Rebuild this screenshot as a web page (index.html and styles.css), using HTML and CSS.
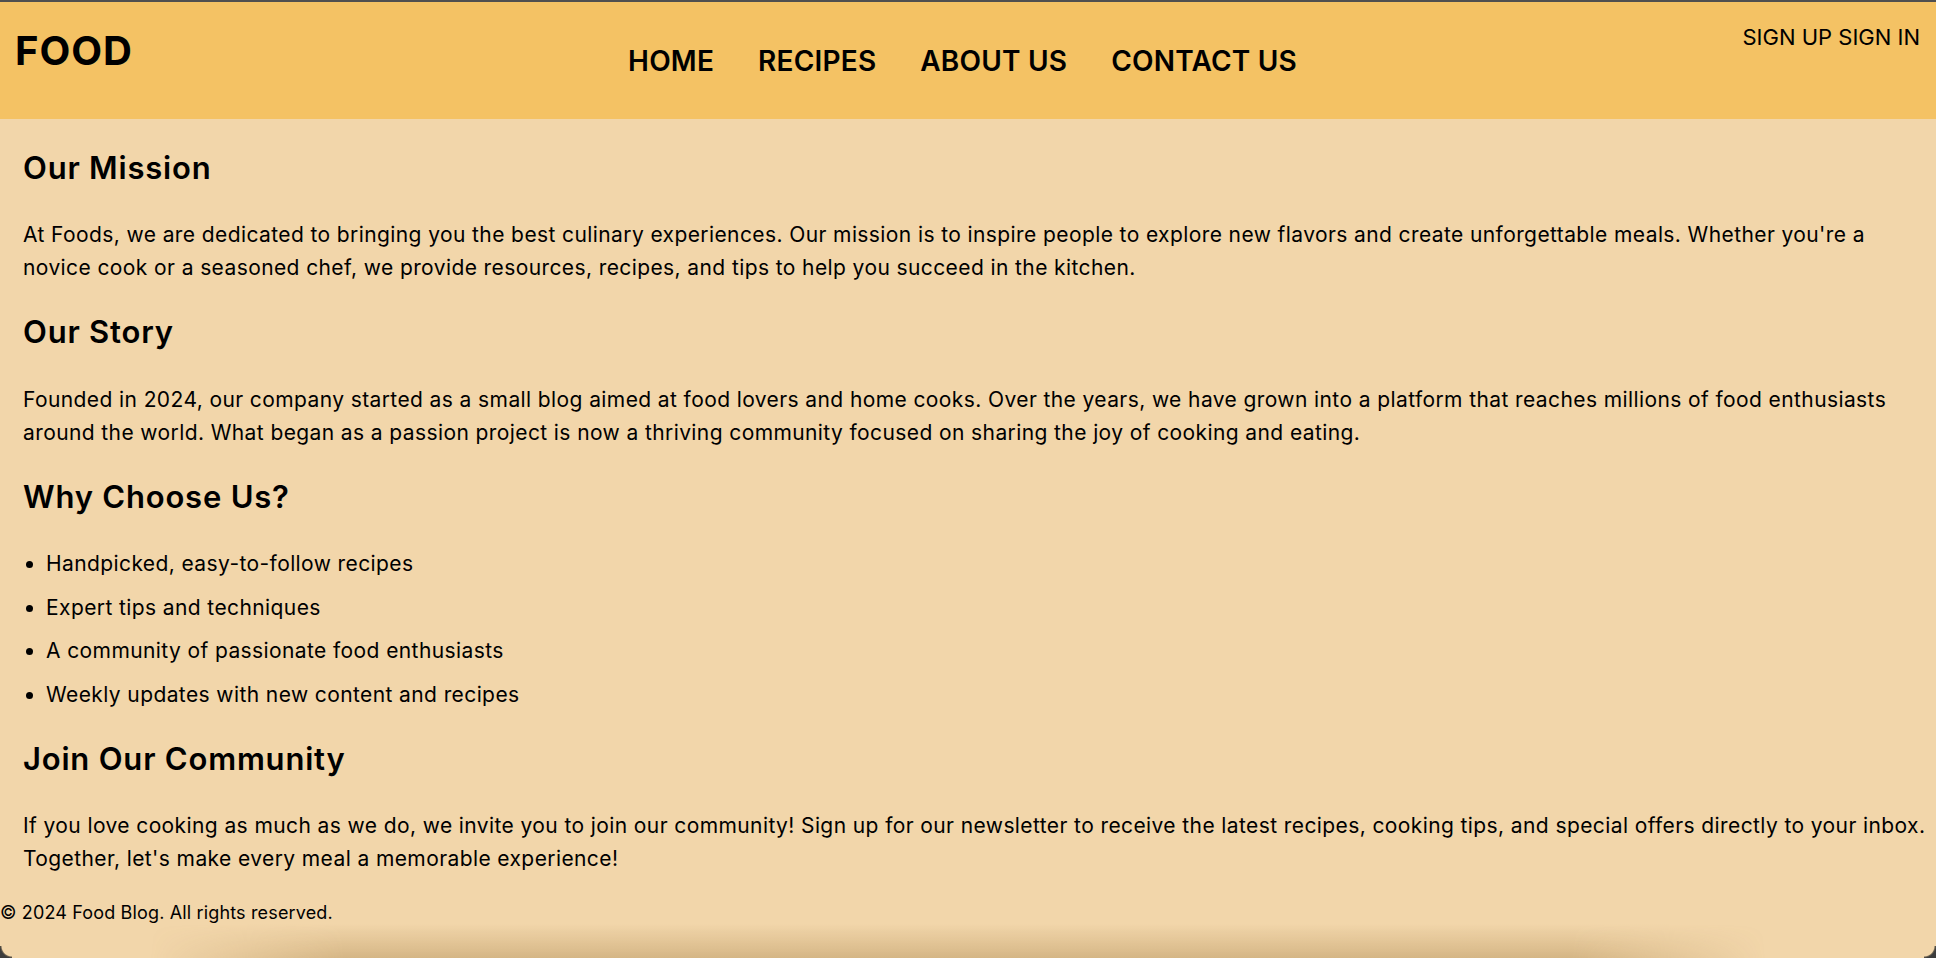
FILE: index.html
```html
<!DOCTYPE html>
<html lang="en">
<head>
<meta charset="utf-8">
<title>About Us - Food</title>
<link rel="stylesheet" href="styles.css">
</head>
<body>
<header class="site-header">
  <div class="logo">FOOD</div>
  <nav class="main-nav">
    <a href="#">HOME</a>
    <a href="#">RECIPES</a>
    <a href="#">ABOUT US</a>
    <a href="#">CONTACT US</a>
  </nav>
  <div class="auth"><a href="#">SIGN UP</a> <a href="#">SIGN IN</a></div>
</header>
<main class="about">
  <section class="block">
    <h2>Our Mission</h2>
    <p>At Foods, we are dedicated to bringing you the best culinary experiences. Our mission is to inspire people to explore new flavors and create unforgettable meals. Whether you're a novice cook or a seasoned chef, we provide resources, recipes, and tips to help you succeed in the kitchen.</p>
  </section>
  <section class="block">
    <h2>Our Story</h2>
    <p>Founded in 2024, our company started as a small blog aimed at food lovers and home cooks. Over the years, we have grown into a platform that reaches millions of food enthusiasts around the world. What began as a passion project is now a thriving community focused on sharing the joy of cooking and eating.</p>
  </section>
  <section class="block">
    <h2>Why Choose Us?</h2>
    <ul class="reasons">
      <li>Handpicked, easy-to-follow recipes</li>
      <li>Expert tips and techniques</li>
      <li>A community of passionate food enthusiasts</li>
      <li>Weekly updates with new content and recipes</li>
    </ul>
  </section>
  <section class="block">
    <h2>Join Our Community</h2>
    <p>If you love cooking as much as we do, we invite you to join our community! Sign up for our newsletter to receive the latest recipes, cooking tips, and special offers directly to your inbox. Together, let's make every meal a memorable experience!</p>
  </section>
</main>
<footer class="site-footer">© 2024 Food Blog. All rights reserved.</footer>
<div class="window-shadow"></div>
<div class="window-corner corner-left"></div>
<div class="window-corner corner-right"></div>
</body>
</html>
```
FILE: styles.css
```css
* {
  box-sizing: border-box;
}

html,
body {
  margin: 0;
  padding: 0;
}

body {
  background: #f2d6aa;
  color: #000;
  font-family: Inter, "Open Sans", sans-serif;
}

.site-header {
  display: grid;
  grid-template-columns: 1fr auto 1fr;
  align-items: start;
  height: 119px;
  background: #f4c264;
  border-top: 2px solid #4f4f4f;
  padding: 0 16px 0 15px;
}

.logo {
  justify-self: start;
  font-size: 40px;
  font-weight: 700;
  line-height: 1;
  letter-spacing: 1px;
  margin-top: 29px;
}

.main-nav {
  display: flex;
  gap: 44px;
  margin-top: 45px;
  margin-right: 10px;
}

.main-nav a {
  font-size: 28px;
  font-weight: 600;
  line-height: 1;
  letter-spacing: 0.2px;
  color: #000;
  text-decoration: none;
}

.auth {
  justify-self: end;
  margin-top: 24px;
  font-size: 22px;
  line-height: 1;
}

.auth a {
  color: #000;
  text-decoration: none;
}

.about {
  display: flex;
  flex-direction: column;
  gap: 30px;
  padding: 30.6px 8px 24px 23px;
}

.block {
  display: flex;
  flex-direction: column;
  gap: 32.5px;
}

.block h2 {
  margin: 0;
  font-size: 31px;
  font-weight: 600;
  line-height: 36px;
  letter-spacing: 0.8px;
}

.block p {
  margin: 0;
  font-size: 21px;
  line-height: 33px;
  letter-spacing: 0.4px;
}

.reasons {
  margin: 0;
  padding-left: 23px;
  font-size: 21px;
  line-height: 33px;
  letter-spacing: 0.4px;
}

.reasons li + li {
  margin-top: 10.5px;
}

.site-footer {
  font-size: 18px;
  line-height: 27px;
  letter-spacing: 0.15px;
}

.window-shadow {
  position: fixed;
  left: 150px;
  right: 170px;
  bottom: 0;
  height: 34px;
  background: linear-gradient(to bottom, rgba(140, 100, 40, 0), rgba(140, 100, 40, 0.28));
  -webkit-mask-image: linear-gradient(to right, transparent, #000 12%, #000 88%, transparent);
  mask-image: linear-gradient(to right, transparent, #000 12%, #000 88%, transparent);
  pointer-events: none;
}

.window-corner {
  position: fixed;
  bottom: 0;
  width: 12px;
  height: 12px;
  pointer-events: none;
}

.corner-left {
  left: 0;
  background: radial-gradient(circle at 12px 0, transparent 10px, #6b6150 11px, #3c3c3c 12px);
}

.corner-right {
  right: 0;
  background: radial-gradient(circle at 0 0, transparent 10px, #6b6150 11px, #3c3c3c 12px);
}
```
